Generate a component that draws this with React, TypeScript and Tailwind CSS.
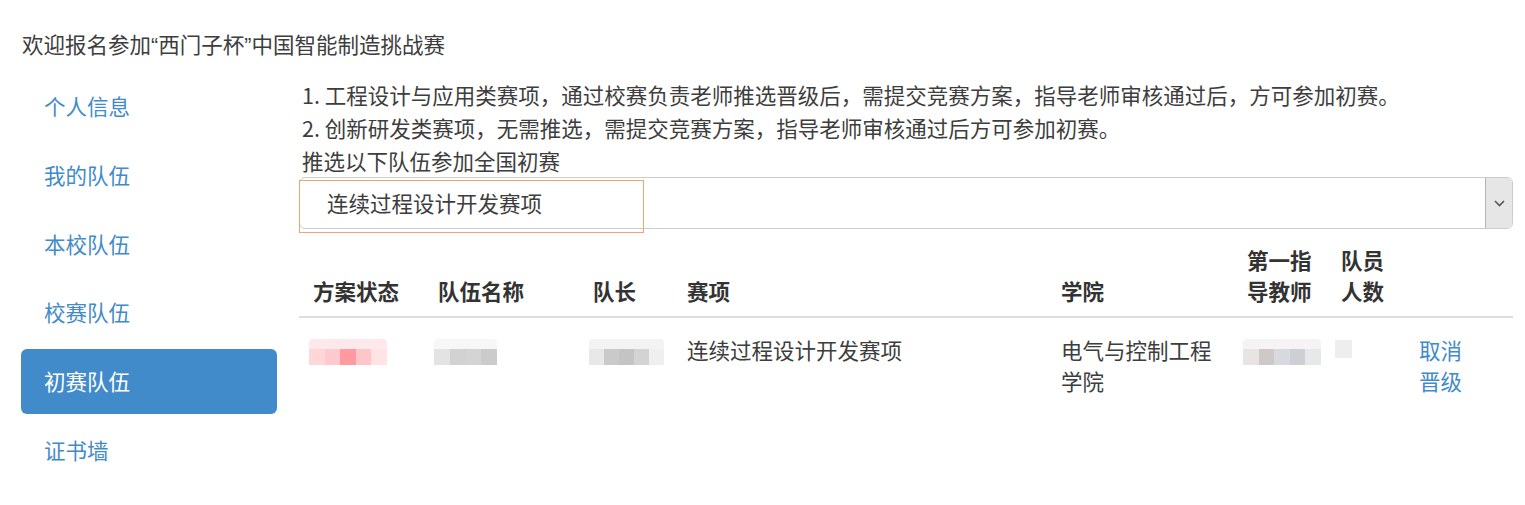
import React from "react";

const FONT = { fontFamily: '"Noto Sans CJK SC", "Noto Sans", sans-serif' };

function Mosaic({ top, blocks, w, h = 16, topH = 10 }: { top: string; blocks: string[]; w: number; h?: number; topH?: number }) {
  return (
    <div className="inline-flex flex-col align-middle" style={{ width: w }}>
      <div style={{ height: topH, background: top }} className="rounded-t-[4px]" />
      <div className="flex" style={{ height: h }}>
        {blocks.map((c, i) => (
          <div key={i} className="flex-1" style={{ background: c }} />
        ))}
      </div>
    </div>
  );
}

const navItems = ["个人信息", "我的队伍", "本校队伍", "校赛队伍", "初赛队伍", "证书墙"];

export default function App() {
  return (
    <div className="w-[1525px] h-[505px] bg-white pt-[28px] pl-[21px] pr-[12px] text-[21.5px] text-[#3d3d3d]" style={FONT}>
      <div className="h-[31px] leading-[31px] pl-[1px]">
        欢迎报名参加<span className="font-['Liberation_Sans']">“</span>西门子杯<span className="font-['Liberation_Sans']">”</span>中国智能制造挑战赛
      </div>
      <div className="flex mt-[15px] gap-[22px]">
        <nav className="w-[256px] shrink-0 flex flex-col gap-[3.7px]">
          {navItems.map((n) => (
            <div
              key={n}
              className={
                "h-[65px] flex items-center pl-[23px] rounded-[6px] " +
                (n === "初赛队伍" ? "bg-[#428bca] text-white" : "text-[#428bca]")
              }
            >
              {n}
            </div>
          ))}
        </nav>
        <main className="flex-1 mt-[4px]">
          <div className="leading-[33px] pl-[3px]">
            <div>1. 工程设计与应用类赛项，通过校赛负责老师推选晋级后，需提交竞赛方案，指导老师审核通过后，方可参加初赛。</div>
            <div>2. 创新研发类赛项，无需推选，需提交竞赛方案，指导老师审核通过后方可参加初赛。</div>
            <div>推选以下队伍参加全国初赛</div>
          </div>
          <div className="relative h-[52px] border border-[#cccccc] rounded-[6px] flex items-stretch">
            <div className="flex-1 flex items-center pl-[27px]">连续过程设计开发赛项</div>
            <div className="w-[27px] bg-[#e6e6e6] border-l border-[#b5b5b5] rounded-r-[5px] flex items-center justify-center">
              <svg width="11" height="7" viewBox="0 0 11 7">
                <path d="M1 1 L5.5 5.5 L10 1" fill="none" stroke="#555" strokeWidth="1.6" />
              </svg>
            </div>
            <div className="absolute left-[-1px] top-[2px] w-[345px] h-[53px] border-[1.5px] border-[#f4a46e]" />
          </div>
          <table className="mt-[3px] w-full border-collapse table-fixed">
            <colgroup>
              <col className="w-[127px]" />
              <col className="w-[155px]" />
              <col className="w-[94px]" />
              <col className="w-[374px]" />
              <col className="w-[186px]" />
              <col className="w-[94px]" />
              <col className="w-[78px]" />
              <col />
            </colgroup>
            <thead>
              <tr className="border-b-2 border-[#dddddd] text-[#333]">
                <th className="text-left align-bottom leading-[31px] pt-[12px] pb-[10px] pl-[14px] pr-[12px] font-bold">方案状态</th>
                <th className="text-left align-bottom leading-[31px] pt-[12px] pb-[10px] px-[12px] font-bold">队伍名称</th>
                <th className="text-left align-bottom leading-[31px] pt-[12px] pb-[10px] px-[12px] font-bold">队长</th>
                <th className="text-left align-bottom leading-[31px] pt-[12px] pb-[10px] px-[12px] font-bold">赛项</th>
                <th className="text-left align-bottom leading-[31px] pt-[12px] pb-[10px] px-[12px] font-bold">学院</th>
                <th className="text-left align-bottom leading-[31px] pt-[12px] pb-[10px] px-[12px] font-bold">第一指导教师</th>
                <th className="text-left align-bottom leading-[31px] pt-[12px] pb-[10px] px-[12px] font-bold">队员人数</th>
                <th className="text-left align-bottom leading-[31px] pt-[12px] pb-[10px] px-[12px] font-bold"></th>
              </tr>
            </thead>
            <tbody>
              <tr className="align-top leading-[31px]">
                <td className="pt-[16px] pl-[10px] pr-[12px]">
                  <div className="mt-[-1px]">
                    <Mosaic w={78} top="#fde9eb" blocks={["#ffd7da", "#ffc9cd", "#ff9ba0", "#ffc6c9", "#ffe3e5"]} />
                  </div>
                </td>
                <td className="pt-[16px] px-[8px]">
                  <div className="mt-[-1px]">
                    <Mosaic w={63} top="#f7f7f7" blocks={["#e3e3e3", "#d2d2d2", "#d4d4d4", "#cbcbcb"]} />
                  </div>
                </td>
                <td className="pt-[16px] px-[8px]">
                  <div className="mt-[-1px]">
                    <Mosaic w={75} top="#f3f3f3" blocks={["#e8e8e8", "#cacaca", "#c4c4c4", "#d3d3d3", "#efefef"]} />
                  </div>
                </td>
                <td className="pt-[16px] px-[12px]">连续过程设计开发赛项</td>
                <td className="pt-[16px] px-[12px]">电气与控制工程学院</td>
                <td className="pt-[16px] px-[8px]">
                  <div className="mt-[-1px]">
                    <Mosaic w={78} top="#f5f3f3" blocks={["#e8e4e4", "#cfc8c8", "#d6d9de", "#cccfd4", "#e6e8ea"]} />
                  </div>
                </td>
                <td className="pt-[16px] px-[6px]">
                  <div className="mt-[6px] w-[17px] h-[18px] bg-[#eeeeee]" />
                </td>
                <td className="pt-[16px] px-[12px] text-[#428bca]">
                  <div>取消</div>
                  <div>晋级</div>
                </td>
              </tr>
            </tbody>
          </table>
        </main>
      </div>
    </div>
  );
}
